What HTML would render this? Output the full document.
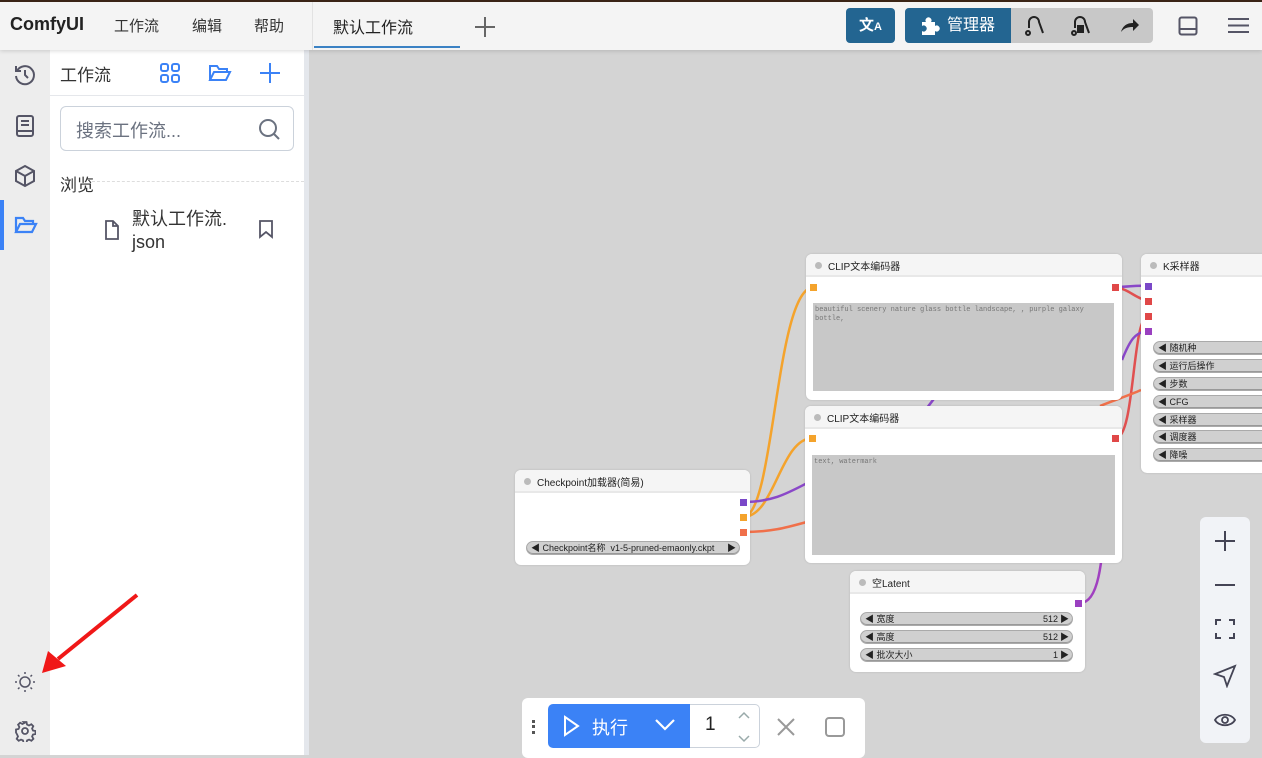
<!DOCTYPE html>
<html><head><meta charset="utf-8"><style>
*{box-sizing:border-box;margin:0;padding:0}
body{width:1262px;height:755px;overflow:hidden;position:relative;font-family:"Liberation Sans","Noto Sans CJK SC",sans-serif;background:#d4d4d4}
.abs{position:absolute}
.hdr{left:0;top:0;width:1262px;height:50px;background:#f4f4f4;box-shadow:0 1px 4px rgba(0,0,0,.15);z-index:5}
.topline{left:0;top:0;width:1262px;height:2px;background:#3a2416;z-index:6}
.node{position:absolute;background:#fff;border-radius:6px;box-shadow:0 0 2px rgba(0,0,0,.15);overflow:hidden}
.nt{height:23px;background:#f5f5f5;border-bottom:2px solid #e8e8e8;font-size:10px;color:#222;padding:4px 0 0 22px;position:relative}
.nt:before{content:"";position:absolute;left:9px;top:8px;width:7px;height:7px;border-radius:50%;background:#bbb}
.w{position:absolute;height:14px;background:#d0d0d0;border:1px solid #aaa;border-radius:7px;font-size:9px;color:#222;line-height:12px;padding-left:4px;box-shadow:inset 0 -1px 0 #999}
.w b{font-weight:normal;position:absolute;right:14px}
.w i{font-style:normal;position:absolute;right:3px}
.sq{position:absolute;width:7px;height:7px}
.ta{position:absolute;background:#c8c8c8;font-family:"Liberation Mono",monospace;font-size:7px;color:#777;padding:3px 2px;line-height:9px}
</style></head><body>
<div class="abs topline"></div>
<div class="abs hdr">
 <div class="abs" style="left:10px;top:14px;font-weight:bold;font-size:18px;color:#222">ComfyUI</div>
 <div class="abs" style="left:114px;top:15px;font-size:15px;color:#333">工作流</div>
 <div class="abs" style="left:192px;top:15px;font-size:15px;color:#333">编辑</div>
 <div class="abs" style="left:254px;top:15px;font-size:15px;color:#333">帮助</div>
 <div class="abs" style="left:312px;top:2px;width:1px;height:48px;background:#e2e2e2"></div>
 <div class="abs" style="left:333px;top:14px;font-size:16px;color:#222">默认工作流</div>
 <div class="abs" style="left:314px;top:46px;width:146px;height:2px;background:#3b82c4"></div>
 <svg class="abs" style="left:474px;top:16px" width="22" height="22"><path d="M11 1v20M1 11h20" stroke="#666" stroke-width="2"/></svg>
 <div class="abs" style="left:846px;top:8px;width:49px;height:35px;background:#236591;border-radius:4px;color:#fff;font-size:15px;font-weight:bold;text-align:center;line-height:35px">文<span style="font-size:11px">A</span></div>
 <div class="abs" style="left:905px;top:8px;width:248px;height:35px;background:#c8c8c8;border-radius:4px"></div>
 <div class="abs" style="left:905px;top:8px;width:106px;height:35px;background:#236591;border-radius:4px 0 0 4px;color:#fff;font-size:16px;line-height:35px;padding-left:42px">管理器</div>
 <svg class="abs" style="left:918px;top:14px" width="22" height="22" viewBox="0 0 22 22"><path d="M4 8h4a3 3 0 1 1 5 0h4v4a3 3 0 1 1 0 5v4H4v-4a3 3 0 1 0 0-5z" fill="#fff"/></svg>
 <svg class="abs" style="left:1023px;top:14px" width="24" height="22"><path d="M3 19a2 2 0 1 0 4 0 2 2 0 1 0-4 0M6 14V8a5 5 0 0 1 10 0l4 11" stroke="#222" stroke-width="2" fill="none"/></svg>
 <svg class="abs" style="left:1069px;top:14px" width="24" height="22"><path d="M3 19a2 2 0 1 0 4 0 2 2 0 1 0-4 0M6 14V8a5 5 0 0 1 10 0l4 11" stroke="#222" stroke-width="2" fill="none"/><path d="M8 11h7v8H8z" fill="#222"/></svg>
 <svg class="abs" style="left:1119px;top:16px" width="22" height="18"><path d="M2 16c2-7 7-9 12-9V3l6 6-6 6v-4c-5 0-9 1-12 5z" fill="#222"/></svg>
 <svg class="abs" style="left:1178px;top:16px" width="20" height="20"><rect x="1.5" y="1.5" width="17" height="17" rx="2" stroke="#556" stroke-width="2" fill="none"/><path d="M2 13h16" stroke="#556" stroke-width="2"/></svg>
 <svg class="abs" style="left:1228px;top:17px" width="21" height="17"><path d="M0 2h21M0 8.5h21M0 15h21" stroke="#556" stroke-width="2"/></svg>
</div>
<div class="abs" style="left:0;top:50px;width:50px;height:705px;background:#ededed"></div>
<div class="abs" style="left:0;top:200px;width:4px;height:50px;background:#3b82f6"></div>
<svg class="abs" style="left:13px;top:63px" width="24" height="24" viewBox="0 0 24 24" fill="none" stroke="#556" stroke-width="2"><path d="M4 8a9 9 0 1 1-1 5"/><path d="M3 3v5h5M12 7v5l3 3"/></svg>
<svg class="abs" style="left:14px;top:114px" width="22" height="24" fill="none" stroke="#556" stroke-width="2"><rect x="3" y="2" width="16" height="20" rx="2"/><path d="M7 7h8M7 11h8M3 17h16"/></svg>
<svg class="abs" style="left:13px;top:164px" width="24" height="24" fill="none" stroke="#556" stroke-width="2"><path d="M12 2l9 5v10l-9 5-9-5V7zM3 7l9 5 9-5M12 12v10"/></svg>
<svg class="abs" style="left:14px;top:215px" width="24" height="20" fill="none" stroke="#3b82f6" stroke-width="2.2"><path d="M2 17V3h7l2 3h8v3M2 17l4-8h16l-4 8z"/></svg>
<svg class="abs" style="left:14px;top:671px" width="22" height="22" fill="none" stroke="#556" stroke-width="1.5"><circle cx="11" cy="11" r="5"/><path d="M11 1v2M11 19v2M1 11h2M19 11h2M4 4l1.5 1.5M16.5 16.5L18 18M4 18l1.5-1.5M16.5 5.5L18 4"/></svg>
<svg class="abs" style="left:14px;top:720px" width="22" height="22" fill="none" stroke="#556" stroke-width="1.8"><circle cx="11" cy="11" r="3"/><path d="M9.5 2h3l.5 2.5 2 1 2.3-1.3 2 2-1.2 2.3.9 2.1 2.5.4v3l-2.5.5-.9 2 1.3 2.3-2 2-2.3-1.2-2 .8-.6 2.6h-3l-.5-2.6-2-.8-2.3 1.2-2-2 1.3-2.3-.9-2L2 12.5v-3l2.5-.5.9-2L4.1 4.7l2-2 2.3 1.3 2-1z"/></svg>
<div class="abs" style="left:50px;top:50px;width:254px;height:705px;background:#fff"></div>
<div class="abs" style="left:304px;top:50px;width:5px;height:705px;background:#e4e7ec"></div>
<div class="abs" style="left:60px;top:61px;font-size:17px;color:#333">工作流</div>
<svg class="abs" style="left:159px;top:62px" width="22" height="22" fill="none" stroke="#3b82f6" stroke-width="2"><rect x="2" y="2" width="7" height="7" rx="2"/><rect x="13" y="2" width="7" height="7" rx="2"/><rect x="2" y="13" width="7" height="7" rx="2"/><rect x="13" y="13" width="7" height="7" rx="2"/></svg>
<svg class="abs" style="left:208px;top:63px" width="24" height="20" fill="none" stroke="#3b82f6" stroke-width="2"><path d="M2 17V3h7l2 3h8v3M2 17l4-8h16l-4 8z"/></svg>
<svg class="abs" style="left:258px;top:61px" width="24" height="24"><path d="M12 2v20M2 12h20" stroke="#3b82f6" stroke-width="2"/></svg>
<div class="abs" style="left:50px;top:95px;width:254px;height:1px;background:#e5e7eb"></div>
<div class="abs" style="left:60px;top:106px;width:234px;height:45px;border:1px solid #cbd2db;border-radius:6px"></div>
<div class="abs" style="left:76px;top:117px;font-size:18px;color:#6b7280">搜索工作流...</div>
<svg class="abs" style="left:257px;top:117px" width="24" height="24" fill="none" stroke="#6b7280" stroke-width="2"><circle cx="11" cy="11" r="8"/><path d="M17 17l5 5"/></svg>
<div class="abs" style="left:60px;top:171px;font-size:17px;color:#333">浏览</div>
<div class="abs" style="left:92px;top:181px;width:212px;border-top:1px dashed #ddd"></div>
<svg class="abs" style="left:104px;top:219px" width="16" height="22" fill="none" stroke="#556" stroke-width="1.8"><path d="M2 2h7l5 5v13H2zM9 2v5h5"/></svg>
<div class="abs" style="left:132px;top:208px;font-size:18px;color:#333;line-height:23px">默认工作流.<br>json</div>
<svg class="abs" style="left:258px;top:219px" width="16" height="20" fill="none" stroke="#556" stroke-width="1.8"><path d="M2 2h12v16l-6-5-6 5z"/></svg>
<svg class="abs" style="left:0;top:0" width="1262" height="755" fill="none" stroke-width="2.5">
<path d="M743 517C775 517 775 287 814 287" stroke="#f4a32c"/>
<path d="M743 517C775 517 780 438 813 438" stroke="#f4a32c"/>
<path d="M743 502C790 502 800 480 860 460C900 440 920 420 940 390" stroke="#8a48c8"/>
<path d="M743 532C790 532 800 520 860 510" stroke="#f0704a"/>
<path d="M1116 287C1130 287 1135 285 1148 286" stroke="#8a48c8"/>
<path d="M1116 287C1130 290 1135 298 1148 301" stroke="#e05050"/>
<path d="M1116 438C1135 438 1132 316 1148 316" stroke="#e05050"/>
<path d="M1080 603C1110 603 1100 500 1115 440" stroke="#a040c0"/>
<path d="M1122 360C1130 340 1135 332 1148 331" stroke="#8a48c8"/>
<path d="M1100 406C1115 400 1130 395 1141 390" stroke="#f0704a"/>
</svg>
<div class="node" style="left:806px;top:254px;width:316px;height:146px"><div class="nt">CLIP文本编码器</div></div>
<div class="sq" style="left:810px;top:284px;background:#f4a32c"></div>
<div class="sq" style="left:1112px;top:284px;background:#e04848"></div>
<div class="ta" style="left:813px;top:303px;width:301px;height:88px">beautiful scenery nature glass bottle landscape, , purple galaxy bottle,</div>
<div class="node" style="left:805px;top:406px;width:317px;height:157px"><div class="nt">CLIP文本编码器</div></div>
<div class="sq" style="left:809px;top:435px;background:#f4a32c"></div>
<div class="sq" style="left:1112px;top:435px;background:#e04848"></div>
<div class="ta" style="left:812px;top:455px;width:303px;height:100px">text, watermark</div>
<div class="node" style="left:1141px;top:254px;width:130px;height:219px"><div class="nt">K采样器</div></div>
<div class="sq" style="left:1145px;top:283px;background:#7a48c8"></div>
<div class="sq" style="left:1145px;top:298px;background:#e04848"></div>
<div class="sq" style="left:1145px;top:313px;background:#e04848"></div>
<div class="sq" style="left:1145px;top:328px;background:#9a40c0"></div>
<div class="w" style="left:1153px;top:341px;width:120px">◀ 随机种</div>
<div class="w" style="left:1153px;top:359px;width:120px">◀ 运行后操作</div>
<div class="w" style="left:1153px;top:377px;width:120px">◀ 步数</div>
<div class="w" style="left:1153px;top:395px;width:120px">◀ CFG</div>
<div class="w" style="left:1153px;top:413px;width:120px">◀ 采样器</div>
<div class="w" style="left:1153px;top:430px;width:120px">◀ 调度器</div>
<div class="w" style="left:1153px;top:448px;width:120px">◀ 降噪</div>
<div class="node" style="left:515px;top:470px;width:235px;height:95px"><div class="nt">Checkpoint加载器(简易)</div></div>
<div class="sq" style="left:740px;top:499px;background:#7a48c8"></div>
<div class="sq" style="left:740px;top:514px;background:#f4a32c"></div>
<div class="sq" style="left:740px;top:529px;background:#f0704a"></div>
<div class="w" style="left:526px;top:541px;width:214px">◀ Checkpoint名称&nbsp; v1-5-pruned-emaonly.ckpt<i>▶</i></div>
<div class="node" style="left:850px;top:571px;width:235px;height:101px"><div class="nt">空Latent</div></div>
<div class="sq" style="left:1075px;top:600px;background:#9a40c0"></div>
<div class="w" style="left:860px;top:612px;width:213px">◀ 宽度<b>512</b><i>▶</i></div>
<div class="w" style="left:860px;top:630px;width:213px">◀ 高度<b>512</b><i>▶</i></div>
<div class="w" style="left:860px;top:648px;width:213px">◀ 批次大小<b>1</b><i>▶</i></div>
<div class="abs" style="left:1200px;top:517px;width:50px;height:226px;background:#f1f3f7;border-radius:6px"></div>
<svg class="abs" style="left:1213px;top:529px" width="24" height="24"><path d="M12 2v20M2 12h20" stroke="#445" stroke-width="2"/></svg>
<svg class="abs" style="left:1213px;top:573px" width="24" height="24"><path d="M2 12h20" stroke="#445" stroke-width="2"/></svg>
<svg class="abs" style="left:1214px;top:618px" width="22" height="22" fill="none" stroke="#445" stroke-width="2"><path d="M2 7V2h5M15 2h5v5M20 15v5h-5M7 20H2v-5"/></svg>
<svg class="abs" style="left:1213px;top:664px" width="24" height="24" fill="none" stroke="#445" stroke-width="1.8"><path d="M22 2L2 10l9 3 3 9z"/></svg>
<svg class="abs" style="left:1213px;top:709px" width="24" height="22" fill="none" stroke="#445" stroke-width="1.8"><path d="M2 11c4-7 16-7 20 0-4 7-16 7-20 0z"/><circle cx="12" cy="11" r="3"/></svg>
<div class="abs" style="left:522px;top:698px;width:343px;height:60px;background:#fff;border-radius:6px"></div>
<div class="abs" style="left:532px;top:720px;width:3px;height:14px;border-left:3px dotted #555"></div>
<div class="abs" style="left:548px;top:704px;width:142px;height:44px;background:#3b82f6;border-radius:5px 0 0 5px"></div>
<svg class="abs" style="left:561px;top:715px" width="20" height="22" fill="none" stroke="#fff" stroke-width="2"><path d="M4 2l13 9-13 9z"/></svg>
<div class="abs" style="left:592px;top:714px;color:#fff;font-size:18px">执行</div>
<svg class="abs" style="left:654px;top:718px" width="22" height="14" fill="none" stroke="#fff" stroke-width="2.2"><path d="M2 2l9 9 9-9"/></svg>
<div class="abs" style="left:690px;top:704px;width:70px;height:44px;border:1px solid #cbd2db;border-left:none;border-radius:0 5px 5px 0"></div>
<div class="abs" style="left:705px;top:714px;font-size:19px;color:#222">1</div>
<svg class="abs" style="left:737px;top:710px" width="14" height="34" fill="none" stroke="#9aa" stroke-width="1.5"><path d="M2 8l5-5 5 5M2 26l5 5 5-5"/></svg>
<svg class="abs" style="left:776px;top:717px" width="20" height="20" stroke="#999" stroke-width="2"><path d="M2 2l16 16M18 2L2 18"/></svg>
<svg class="abs" style="left:824px;top:716px" width="22" height="22" fill="none" stroke="#999" stroke-width="2"><rect x="2" y="2" width="18" height="18" rx="3"/></svg>
<svg class="abs" style="left:0;top:0" width="300" height="755"><path d="M137 595L58 659" stroke="#f01818" stroke-width="4"/><path d="M42 673L48 651 66 666z" fill="#f01818"/></svg>
</body></html>
